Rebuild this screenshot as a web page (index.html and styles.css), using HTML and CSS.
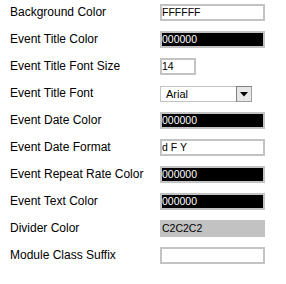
FILE: index.html
```html
<!DOCTYPE html>
<html>
<head>
<meta charset="utf-8">
<link rel="stylesheet" href="styles.css">
</head>
<body>
<div class="form">
  <div class="row"><span class="label">Background Color</span><span class="field">FFFFFF</span></div>
  <div class="row"><span class="label">Event Title Color</span><span class="field dark">000000</span></div>
  <div class="row"><span class="label">Event Title Font Size</span><span class="field small">14</span></div>
  <div class="row"><span class="label">Event Title Font</span>
    <span class="select"><span class="select-text">Arial</span><span class="select-btn"><svg width="8" height="5" viewBox="0 0 8 5"><path d="M0 0H8L4 4.5Z" fill="#000"/></svg></span></span>
  </div>
  <div class="row"><span class="label">Event Date Color</span><span class="field dark">000000</span></div>
  <div class="row"><span class="label">Event Date Format</span><span class="field">d F Y</span></div>
  <div class="row"><span class="label">Event Repeat Rate Color</span><span class="field dark">000000</span></div>
  <div class="row"><span class="label">Event Text Color</span><span class="field dark">000000</span></div>
  <div class="row"><span class="label">Divider Color</span><span class="field grey">C2C2C2</span></div>
  <div class="row"><span class="label">Module Class Suffix</span><span class="field"></span></div>
</div>
</body>
</html>
```
FILE: styles.css
```css
html, body {
  margin: 0;
  padding: 0;
  background: #fff;
}
.form {
  display: flex;
  flex-direction: column;
  gap: 10px;
  padding: 4px 0 0 10px;
  font-family: "Liberation Sans", Arial, sans-serif;
}
.row {
  display: flex;
  align-items: center;
  height: 17px;
}
.label {
  width: 150px;
  flex: none;
  font-size: 12px;
  line-height: 17px;
  color: #000;
  white-space: nowrap;
}
.field {
  box-sizing: border-box;
  width: 105px;
  height: 17px;
  border: 2px solid #c3c3c3;
  background: #fff;
  color: #000;
  font-size: 10.5px;
  line-height: 13px;
  padding-left: 0;
  white-space: nowrap;
  overflow: hidden;
}
.field.small {
  width: 36px;
}
.field.dark {
  background: #000;
  color: #fff;
}
.field.grey {
  background: #c2c2c2;
  border-color: #c2c2c2;
  color: #000;
}
.select {
  box-sizing: border-box;
  width: 92px;
  height: 16px;
  border: 1px solid #c3c3c3;
  border-right: none;
  background: #fff;
  display: flex;
  align-items: center;
  justify-content: space-between;
}
.select-text {
  font-size: 11px;
  padding-left: 5px;
  color: #000;
}
.select-btn {
  box-sizing: border-box;
  width: 16px;
  height: 16px;
  margin-top: -1px;
  margin-bottom: -1px;
  border: 1px solid #808080;
  border-right-color: #a0a0a0;
  border-bottom-color: #a0a0a0;
  background: #e6e6e6;
  display: flex;
  align-items: center;
  justify-content: center;
  padding-top: 2px;
}
.select-btn svg {
  display: block;
}
```
